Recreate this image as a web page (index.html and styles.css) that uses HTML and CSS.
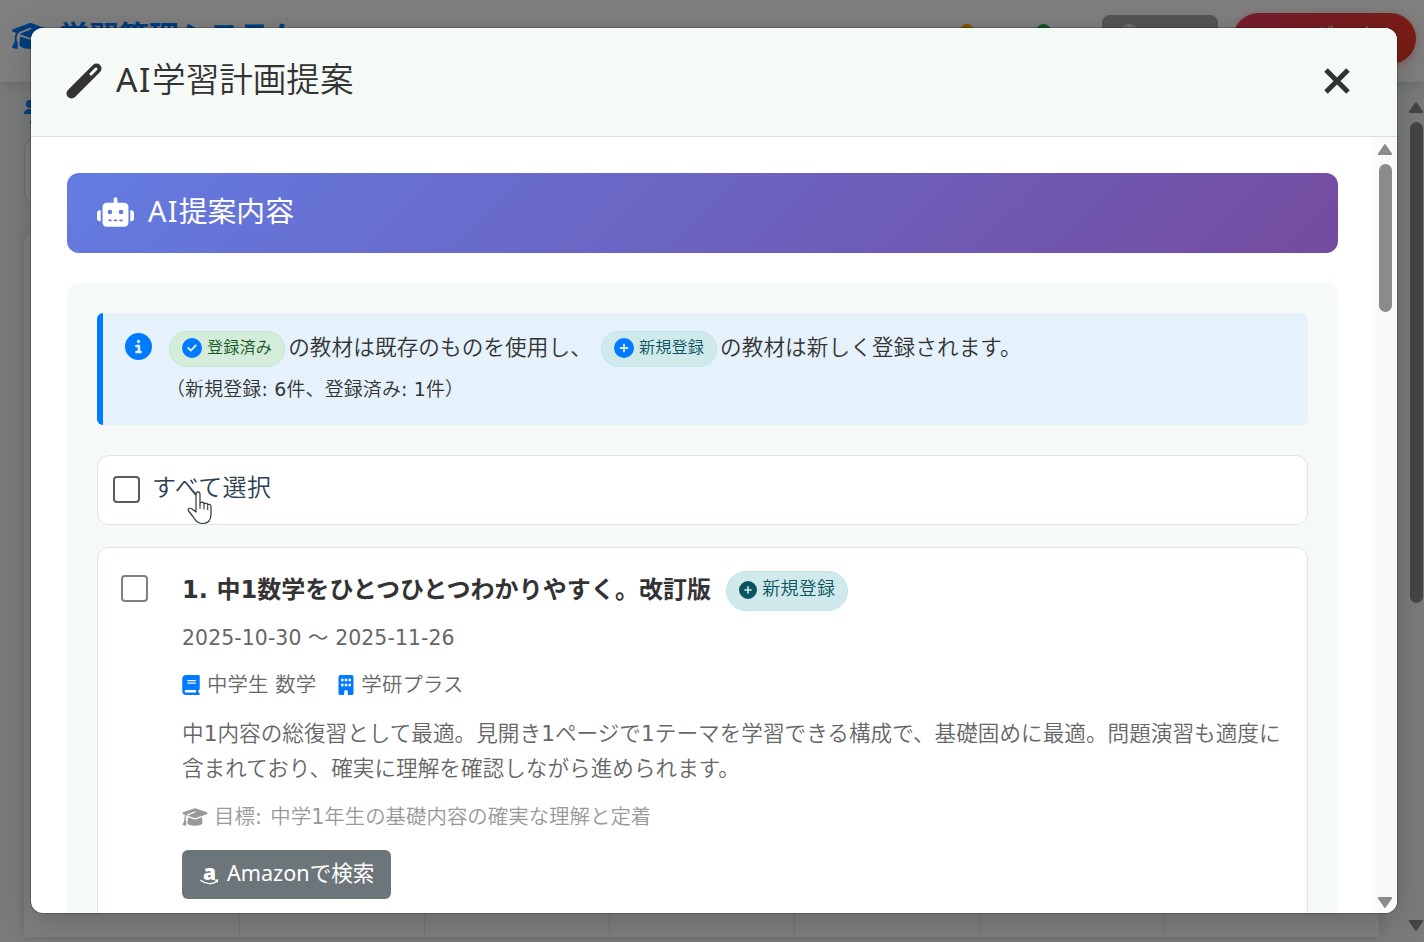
FILE: index.html
```html
<!DOCTYPE html>
<html lang="ja">
<head>
    <title>学習管理システム</title>
    <meta charset="UTF-8">
    <meta name="viewport" content="width=device-width, initial-scale=1.0">
    <link rel="stylesheet" href="styles.css">
</head>
<body>
    <svg class="icon-defs" width="0" height="0">
        <symbol id="icon-cap" viewBox="0 0 640 512"><path d="M320 32c-8.1 0-16.1 1.4-23.7 4.1L15.8 137.4C6.3 140.9 0 149.9 0 160s6.3 19.1 15.8 22.6l57.9 20.9C57.3 229.3 48 259.8 48 291.9v28.1c0 28.4-10.8 57.7-22.3 80.8c-6.5 13-13.9 25.8-22.5 37.6C0 442.7-.9 448.3 .9 453.4s6 8.9 11.2 10.2l64 16c4.2 1.1 8.7 .3 12.4-2s6.3-6.1 7.1-10.4c8.6-42.8 4.3-81.2-2.1-108.7C90.3 344.3 86 329.8 80 316.5V291.9c0-30.2 10.2-58.7 27.9-81.5c12.9-15.5 29.6-28 49.2-35.7l157-61.7c8.2-3.2 17.5 .8 20.7 9s-.8 17.5-9 20.7l-157 61.7c-12.4 4.9-23.3 12.4-32.2 21.6l159.6 57.6c7.6 2.7 15.6 4.1 23.7 4.1s16.1-1.4 23.7-4.1L624.2 182.6c9.5-3.4 15.8-12.5 15.8-22.6s-6.3-19.1-15.8-22.6L343.7 36.1C336.1 33.4 328.1 32 320 32zM128 408c0 35.3 86 72 192 72s192-36.7 192-72L496.7 262.6 354.5 314c-11.1 4-22.8 6-34.5 6s-23.5-2-34.5-6L143.3 262.6 128 408z"/></symbol>
        <symbol id="icon-plus" viewBox="0 0 512 512"><path d="M256 512A256 256 0 1 0 256 0a256 256 0 1 0 0 512zM232 344V280H168c-13.3 0-24-10.7-24-24s10.7-24 24-24h64V168c0-13.3 10.7-24 24-24s24 10.7 24 24v64h64c13.3 0 24 10.7 24 24s-10.7 24-24 24H280v64c0 13.3-10.7 24-24 24s-24-10.7-24-24z"/></symbol>
        <symbol id="icon-check" viewBox="0 0 512 512"><path d="M256 512A256 256 0 1 0 256 0a256 256 0 1 0 0 512zM369 209L241 337c-9.4 9.4-24.6 9.4-33.9 0l-64-64c-9.4-9.4-9.4-24.6 0-33.9s24.6-9.4 33.9 0l47 47L335 175c9.4-9.4 24.6-9.4 33.9 0s9.4 24.6 0 33.9z"/></symbol>
        <symbol id="icon-info" viewBox="0 0 512 512"><path d="M256 512A256 256 0 1 0 256 0a256 256 0 1 0 0 512zM216 336h24V272H216c-13.3 0-24-10.7-24-24s10.7-24 24-24h48c13.3 0 24 10.7 24 24v88h8c13.3 0 24 10.7 24 24s-10.7 24-24 24H216c-13.3 0-24-10.7-24-24s10.7-24 24-24zm40-208a32 32 0 1 1 0 64 32 32 0 1 1 0-64z"/></symbol>
        <symbol id="icon-book" viewBox="0 0 448 512"><path d="M96 0C43 0 0 43 0 96V416c0 53 43 96 96 96H384h32c17.7 0 32-14.3 32-32s-14.3-32-32-32V384c17.7 0 32-14.3 32-32V32c0-17.7-14.3-32-32-32H384 96zm0 384H352v64H96c-17.7 0-32-14.3-32-32s14.3-32 32-32zm32-240c0-8.8 7.2-16 16-16H336c8.8 0 16 7.2 16 16s-7.2 16-16 16H144c-8.8 0-16-7.2-16-16zm16 48H336c8.8 0 16 7.2 16 16s-7.2 16-16 16H144c-8.8 0-16-7.2-16-16s7.2-16 16-16z"/></symbol>
        <symbol id="icon-building" viewBox="0 0 384 512"><path fill-rule="evenodd" d="M48 0C21.5 0 0 21.5 0 48V464c0 26.5 21.5 48 48 48h96V432c0-26.5 21.5-48 48-48s48 21.5 48 48v80h96c26.5 0 48-21.5 48-48V48c0-26.5-21.5-48-48-48H48zM64 96h64v64H64zM160 96h64v64H160zM256 96h64v64H256zM64 224h64v64H64zM160 224h64v64H160zM256 224h64v64H256z"/></symbol>
        <symbol id="icon-robot" viewBox="0 0 640 512"><path d="M320 0c17.7 0 32 14.3 32 32V96H472c39.8 0 72 32.2 72 72V440c0 39.8-32.2 72-72 72H168c-39.8 0-72-32.2-72-72V168c0-39.8 32.2-72 72-72H288V32c0-17.7 14.3-32 32-32zM208 384c-8.8 0-16 7.2-16 16s7.2 16 16 16h32c8.8 0 16-7.2 16-16s-7.2-16-16-16H208zm96 0c-8.8 0-16 7.2-16 16s7.2 16 16 16h32c8.8 0 16-7.2 16-16s-7.2-16-16-16H304zm96 0c-8.8 0-16 7.2-16 16s7.2 16 16 16h32c8.8 0 16-7.2 16-16s-7.2-16-16-16H400zM264 256a40 40 0 1 0 -80 0 40 40 0 1 0 80 0zm152 40a40 40 0 1 0 0-80 40 40 0 1 0 0 80zM48 224H64V416H48c-26.5 0-48-21.5-48-48V272c0-26.5 21.5-48 48-48zm544 0c26.5 0 48 21.5 48 48v96c0 26.5-21.5 48-48 48H576V224h16z"/></symbol>
    </svg>

    <div class="page">
        <header class="navbar">
            <svg class="brand-icon"><use href="#icon-cap"/></svg>
            <span class="brand">学習管理システム</span>
            <span class="dot dot-orange"></span>
            <span class="dot dot-green"></span>
            <div class="btn-settings">
                <svg viewBox="0 0 20 20" width="20" height="20" fill="none" stroke="#ddd" stroke-width="2"><circle cx="10" cy="10" r="9"/><circle cx="10" cy="8" r="5"/></svg>
            </div>
            <div class="btn-logout">ログアウト</div>
        </header>
        <div class="page-main">
            <div class="page-content">
                <svg class="users-icon" viewBox="0 0 30 24" fill="#007bff"><circle cx="6" cy="4" r="4"/><path d="M0 14c0-4 3-5 6-5s5 1 6 5z"/><circle cx="15" cy="9" r="5"/><path d="M6 24c0-6 4-8 9-8s9 2 9 8z"/></svg>
                <div class="panel"></div>
                <div class="calendar">
                    <div></div><div></div><div></div><div></div><div></div><div></div><div></div>
                </div>
            </div>
            <div class="scrollbar page-scroll">
                <svg class="arrow" viewBox="0 0 14 11"><path d="M7 1.5 12.5 9.5h-11z"/></svg>
                <div class="thumb"></div>
                <svg class="arrow arrow-down" viewBox="0 0 14 11"><path d="M7 9.5 12.5 1.5h-11z"/></svg>
            </div>
        </div>
    </div>

    <div class="overlay">
        <div class="modal">
            <div class="modal-header">
                <svg class="wand" viewBox="0 0 36 36"><path d="M5.500 30.500 30.500 5.500" stroke="#333" stroke-width="10" stroke-linecap="round"/><path d="M25 11 30 6" stroke="#f6faf7" stroke-width="3" stroke-linecap="round"/></svg>
                <h2><span class="en">AI</span>学習計画提案</h2>
                <svg class="close" viewBox="0 0 26 26"><path d="M2 2 24 24M24 2 2 24" stroke="#2f3331" stroke-width="5"/></svg>
            </div>
            <div class="modal-body">
                <div class="modal-content">
                    <div class="banner">
                        <svg class="robot"><use href="#icon-robot"/></svg>
                        <h3><span class="en">AI</span>提案内容</h3>
                    </div>
                    <div class="suggestions">
                        <div class="alert">
                            <svg class="info-icon"><use href="#icon-info"/></svg>
                            <div class="alert-text">
                                <div class="alert-line">
                                    <span class="badge badge-green"><svg><use href="#icon-check"/></svg><span>登録済み</span></span>
                                    <span class="alert-word">の教材は既存のものを使用し、</span>
                                    <span class="badge badge-teal badge-second"><svg><use href="#icon-plus"/></svg><span>新規登録</span></span>
                                    <span class="alert-word">の教材は新しく登録されます。</span>
                                </div>
                                <div class="alert-count"><span class="paren">（</span>新規登録<span class="num">: 6</span>件、登録済み<span class="num">: 1</span>件）</div>
                            </div>
                        </div>

                        <label class="select-all">
                            <input type="checkbox" class="check">
                            <span>すべて選択</span>
                        </label>

                        <div class="card">
                            <input type="checkbox" class="check">
                            <div class="card-body">
                                <div class="card-title">
                                    <h4>1. 中1数学をひとつひとつわかりやすく。改訂版</h4>
                                    <span class="badge badge-teal badge-large"><svg><use href="#icon-plus"/></svg><span>新規登録</span></span>
                                </div>
                                <div class="date">2025-10-30 〜 2025-11-26</div>
                                <div class="meta">
                                    <svg class="book"><use href="#icon-book"/></svg><span>中学生 数学</span>
                                    <svg class="building"><use href="#icon-building"/></svg><span>学研プラス</span>
                                </div>
                                <p class="description">中<span class="num">1</span>内容の総復習として最適。見開き<span class="num">1</span>ページで<span class="num">1</span>テーマを学習できる構成で、基礎固めに最適。問題演習も適度に<br>含まれており、確実に理解を確認しながら進められます。</p>
                                <div class="goal"><svg><use href="#icon-cap"/></svg><span>目標<span class="num">: </span>中学<span class="num">1</span>年生の基礎内容の確実な理解と定着</span></div>
                                <div class="btn-amazon">
                                    <svg viewBox="0 0 19 22" fill="#fff"><text class="amazon-a" x="3" y="15.500">a</text><path d="M1 16.500c5 4 12 4 15.500 1" fill="none" stroke="#fff" stroke-width="1.500" stroke-linecap="round"/><path d="M14.500 15.700l3.800-.4-.8 3.800z"/></svg>
                                    <span>Amazonで検索</span>
                                </div>
                            </div>
                        </div>
                    </div>
                </div>
                <div class="scrollbar modal-scroll">
                    <svg class="arrow" viewBox="0 0 14 11"><path d="M7 1.5 12.5 9.5h-11z"/></svg>
                    <div class="thumb"></div>
                    <svg class="arrow arrow-down" viewBox="0 0 14 11"><path d="M7 9.5 12.5 1.5h-11z"/></svg>
                </div>
            </div>
        </div>
    </div>

    <svg class="cursor" viewBox="0 0 26 35"><path d="M9 22V4.500c0-3.500 4-3.500 4 0V14c0-2.500 4-2.500 4 .5 0-2 3.700-2 3.700.8 0-1.500 3.300-1.500 3.300 1.200V24c0 6-3 9.500-8.500 9.500-5 0-7-3-9.500-7L1.500 21c-1-2.500 1.500-3.500 3.500-2z" fill="#fff" stroke="#334" stroke-width="1.200" stroke-linejoin="round"/><path d="M13 14v5M17 15v4.500M20.700 16v4" stroke="#334" stroke-width="1.100" fill="none"/></svg>
</body>
</html>
```
FILE: styles.css
```css
* {
    box-sizing: border-box;
}

body {
    margin: 0;
    width: 1424px;
    height: 942px;
    overflow: hidden;
    font-family: "Noto Sans", "Noto Sans CJK JP", sans-serif;
    font-weight: 350;
    color: #333;
    background-color: #f4f8f6;
}

h2, h3, h4, p {
    margin: 0;
}

svg {
    display: block;
    flex-shrink: 0;
}

.icon-defs {
    position: absolute;
}

/* page behind the modal */
.page {
    height: 942px;
    display: flex;
    flex-direction: column;
}

.navbar {
    height: 82px;
    flex-shrink: 0;
    background-color: #fff;
    box-shadow: 0 3px 12px rgba(0, 0, 0, 0.12);
    display: flex;
    align-items: flex-start;
    padding: 13px 8px 0 12px;
}

.brand-icon {
    width: 37px;
    height: 30px;
    margin-top: 8px;
    fill: #007bff;
}

.brand {
    width: 242px;
    margin-left: 10px;
    margin-top: 5px;
    font-size: 30px;
    line-height: 36px;
    font-weight: 700;
    color: #007bff;
    white-space: nowrap;
}

.dot {
    width: 15px;
    height: 15px;
    border-radius: 50%;
    margin-top: 11px;
}

.dot-orange {
    margin-left: 659px;
    background-color: #ffa500;
}

.dot-green {
    margin-left: 62px;
    background-color: #28a745;
}

.btn-settings {
    width: 116px;
    height: 46px;
    margin-left: 51px;
    margin-top: 2px;
    padding: 9px 17px;
    border-radius: 8px;
    background-color: #a8a8a8;
}

.btn-logout {
    width: 183px;
    height: 51px;
    margin-left: 15px;
    padding-left: 57px;
    border-radius: 26px;
    background: linear-gradient(135deg, #f03a5f, #f03a22);
    box-shadow: 0 2px 8px rgba(240, 60, 70, 0.4);
    color: #fff;
    font-size: 22px;
    line-height: 45px;
    white-space: nowrap;
}

.page-main {
    flex: 1;
    min-height: 0;
    display: flex;
}

.page-content {
    width: 1408px;
    padding: 18px 28px 5px 24px;
}

.users-icon {
    width: 30px;
    height: 24px;
}

.panel {
    height: 68px;
    margin-top: 13px;
    border: 1px solid #d4dbd8;
    border-radius: 12px;
    background-color: #fafcfb;
}

.calendar {
    height: 705px;
    margin-top: 27px;
    border-radius: 12px 12px 0 0;
    background-color: #fff;
    box-shadow: 0 0 8px rgba(0, 0, 0, 0.12);
    display: grid;
    grid-template-columns: 216px repeat(5, 185px) 1fr;
    overflow: hidden;
}

.calendar div {
    border-right: 1px solid #e8e8e8;
}

/* scrollbars */
.scrollbar {
    display: flex;
    flex-direction: column;
    align-items: center;
}

.arrow {
    width: 16px;
    height: 13px;
    fill: #8b8b8b;
    stroke: #8b8b8b;
    stroke-width: 1.5;
    stroke-linejoin: round;
}

.arrow-down {
    margin-top: auto;
}

.thumb {
    border-radius: 7px;
    background-color: #8b8b8b;
}

.page-scroll {
    width: 16px;
    padding: 19px 0 10px;
}

.page-scroll .thumb {
    width: 13px;
    height: 481px;
    margin-top: 8px;
}

/* modal */
.overlay {
    position: absolute;
    inset: 0;
    background-color: rgba(0, 0, 0, 0.5);
    padding: 28px 27px 29px 31px;
}

.modal {
    height: 885px;
    border-radius: 12px;
    background-color: #fff;
    overflow: hidden;
    box-shadow: 0 0 0 1px rgba(0, 0, 0, 0.2), 0 8px 36px rgba(0, 0, 0, 0.2);
    display: flex;
    flex-direction: column;
}

.modal-header {
    height: 109px;
    flex-shrink: 0;
    background-color: #f6faf7;
    border-bottom: 1px solid #dcdfdd;
    display: flex;
    align-items: center;
    padding: 0 47px 2px 35px;
}

.modal-header h2 {
    margin-left: 14px;
    margin-top: -4px;
    font-size: 33.6px;
    line-height: 50px;
    font-weight: 350;
}

.modal-header .en {
    font-weight: 400;
    letter-spacing: 1.6px;
}

.banner .en {
    letter-spacing: 1.3px;
}

.wand {
    width: 36px;
    height: 36px;
}

.close {
    width: 26px;
    height: 26px;
    margin-left: auto;
}

.modal-body {
    flex: 1;
    min-height: 0;
    display: flex;
}

.modal-content {
    width: 1342px;
    padding: 36px 35px 0 36px;
    overflow: hidden;
}

.modal-scroll {
    width: 24px;
    padding: 6px 0 4px;
    background-color: #fafafa;
}

.modal-scroll .thumb {
    width: 13px;
    height: 148px;
    margin-top: 8px;
}

.banner {
    height: 80px;
    border-radius: 12px;
    background: linear-gradient(135deg, #637ce2 0%, #744b9f 100%);
    color: #fff;
    display: flex;
    align-items: center;
    padding: 0 30px 2px;
}

.banner h3 {
    margin-left: 14px;
    margin-top: -2px;
    font-size: 28.8px;
    line-height: 40px;
    font-weight: 400;
}

.robot {
    width: 37px;
    height: 30px;
    fill: #fff;
}

.suggestions {
    margin-top: 30px;
    padding: 30px;
    border-radius: 12px;
    background-color: #f6faf7;
}

.alert {
    height: 112px;
    border-left: 6px solid #007bff;
    border-radius: 6px;
    background-color: #e5f1fb;
    display: flex;
    padding: 18px 22px;
}

.info-icon {
    width: 27px;
    height: 27px;
    margin-top: 2px;
    fill: #007bff;
}

.alert-text {
    margin-left: 17px;
}

.alert-line {
    height: 36px;
    display: flex;
    align-items: center;
    font-size: 21.6px;
    line-height: 32px;
    white-space: nowrap;
}

.alert-word {
    margin-top: -5px;
    letter-spacing: 0.1px;
}

.alert-count {
    margin-top: 8px;
    font-family: "DejaVu Sans", "Noto Sans CJK JP", sans-serif;
    font-size: 18.9px;
    line-height: 28px;
    letter-spacing: 0.2px;
}

.paren {
    margin-left: -3px;
}

.num {
    font-weight: 400;
}

.badge {
    display: inline-flex;
    align-items: center;
    height: 36px;
    padding: 0 12px;
    margin-right: 3px;
    border: 1px solid;
    border-radius: 20px;
    font-size: 16.2px;
    line-height: 32px;
    letter-spacing: 0.1px;
    white-space: nowrap;
}

.badge svg {
    width: 20px;
    height: 20px;
    margin-top: -2px;
    margin-right: 5px;
    fill: #007bff;
}

.badge span {
    margin-top: -4px;
}

.badge-green {
    background-color: #d4edda;
    border-color: #c3e6cb;
    color: #155724;
}

.badge-teal {
    background-color: #d0eaec;
    border-color: #bee5eb;
    color: #0c5460;
}

.badge-second {
    margin-left: 9px;
}

.badge-large {
    height: 40px;
    font-size: 18px;
    letter-spacing: 0.3px;
    margin-left: 15px;
}

.badge-large svg {
    width: 18px;
    height: 18px;
    fill: #0c5460;
}

.badge-large span {
    margin-top: -4px;
}

.check {
    appearance: none;
    width: 27px;
    height: 27px;
    margin: 0;
    flex-shrink: 0;
    border: 2px solid #808080;
    border-radius: 4px;
    background-color: #fff;
}

.select-all {
    height: 70px;
    margin-top: 30px;
    padding: 0 15px 2px;
    border: 1px solid #e0e4e2;
    border-radius: 12px;
    background-color: #fff;
    display: flex;
    align-items: center;
    font-size: 24px;
    line-height: 36px;
    letter-spacing: 0.4px;
    color: #2c3e50;
}

.select-all .check {
    border-color: #5c5c5c;
}

.select-all span {
    margin-left: 12px;
    margin-top: -4px;
}

.card {
    height: 480px;
    margin-top: 22px;
    padding: 23px;
    border: 1px solid #e0e4e2;
    border-radius: 12px;
    background-color: #fff;
    display: flex;
}

.card .check {
    margin-top: 4px;
}

.card-body {
    margin-left: 34px;
    font-family: "DejaVu Sans", "Noto Sans CJK JP", sans-serif;
    color: #666;
}

.card-title {
    height: 40px;
    display: flex;
    align-items: center;
}

.card-title h4 {
    font-size: 24px;
    line-height: 36px;
    font-weight: 700;
    letter-spacing: 0.07px;
    color: #333;
    margin-top: -3px;
    white-space: nowrap;
}

.date {
    margin-top: 12px;
    font-size: 20.4px;
    line-height: 30px;
    font-weight: 400;
    letter-spacing: 0.1px;
}

.meta {
    margin-top: 17px;
    height: 30px;
    display: flex;
    align-items: center;
    font-size: 20.4px;
    line-height: 30px;
    letter-spacing: 0.15px;
}

.meta svg {
    height: 20px;
    margin-right: 7px;
    fill: #007bff;
}

.book {
    width: 18px;
}

.meta .building {
    width: 16px;
    margin-left: 22px;
}

.description {
    margin-top: 16px;
    font-size: 21.6px;
    line-height: 35px;
    letter-spacing: 0.03px;
    white-space: nowrap;
}

.goal {
    margin-top: 16px;
    display: flex;
    align-items: center;
    font-size: 20.4px;
    line-height: 30px;
    letter-spacing: 0.05px;
    word-spacing: 2px;
    color: #999;
}

.goal svg {
    width: 26px;
    height: 20px;
    margin-right: 6px;
    fill: #999;
}

.btn-amazon {
    width: 209px;
    height: 49px;
    margin-top: 18px;
    padding: 0 17px 3px 18px;
    border-radius: 6px;
    background-color: #6c757a;
    color: #fff;
    font-family: "Noto Sans", "Noto Sans CJK JP", sans-serif;
    display: flex;
    align-items: center;
    font-size: 21.6px;
    line-height: 32px;
    font-weight: 400;
    white-space: nowrap;
}

.btn-amazon svg {
    width: 19px;
    height: 22px;
    margin-top: 3px;
    margin-right: 8px;
    overflow: visible;
}

.amazon-a {
    font-size: 21px;
    line-height: 21px;
    font-weight: 900;
}

/* pointer over the select-all label */
.cursor {
    position: absolute;
    left: 187px;
    top: 490px;
    width: 26px;
    height: 35px;
}
```
